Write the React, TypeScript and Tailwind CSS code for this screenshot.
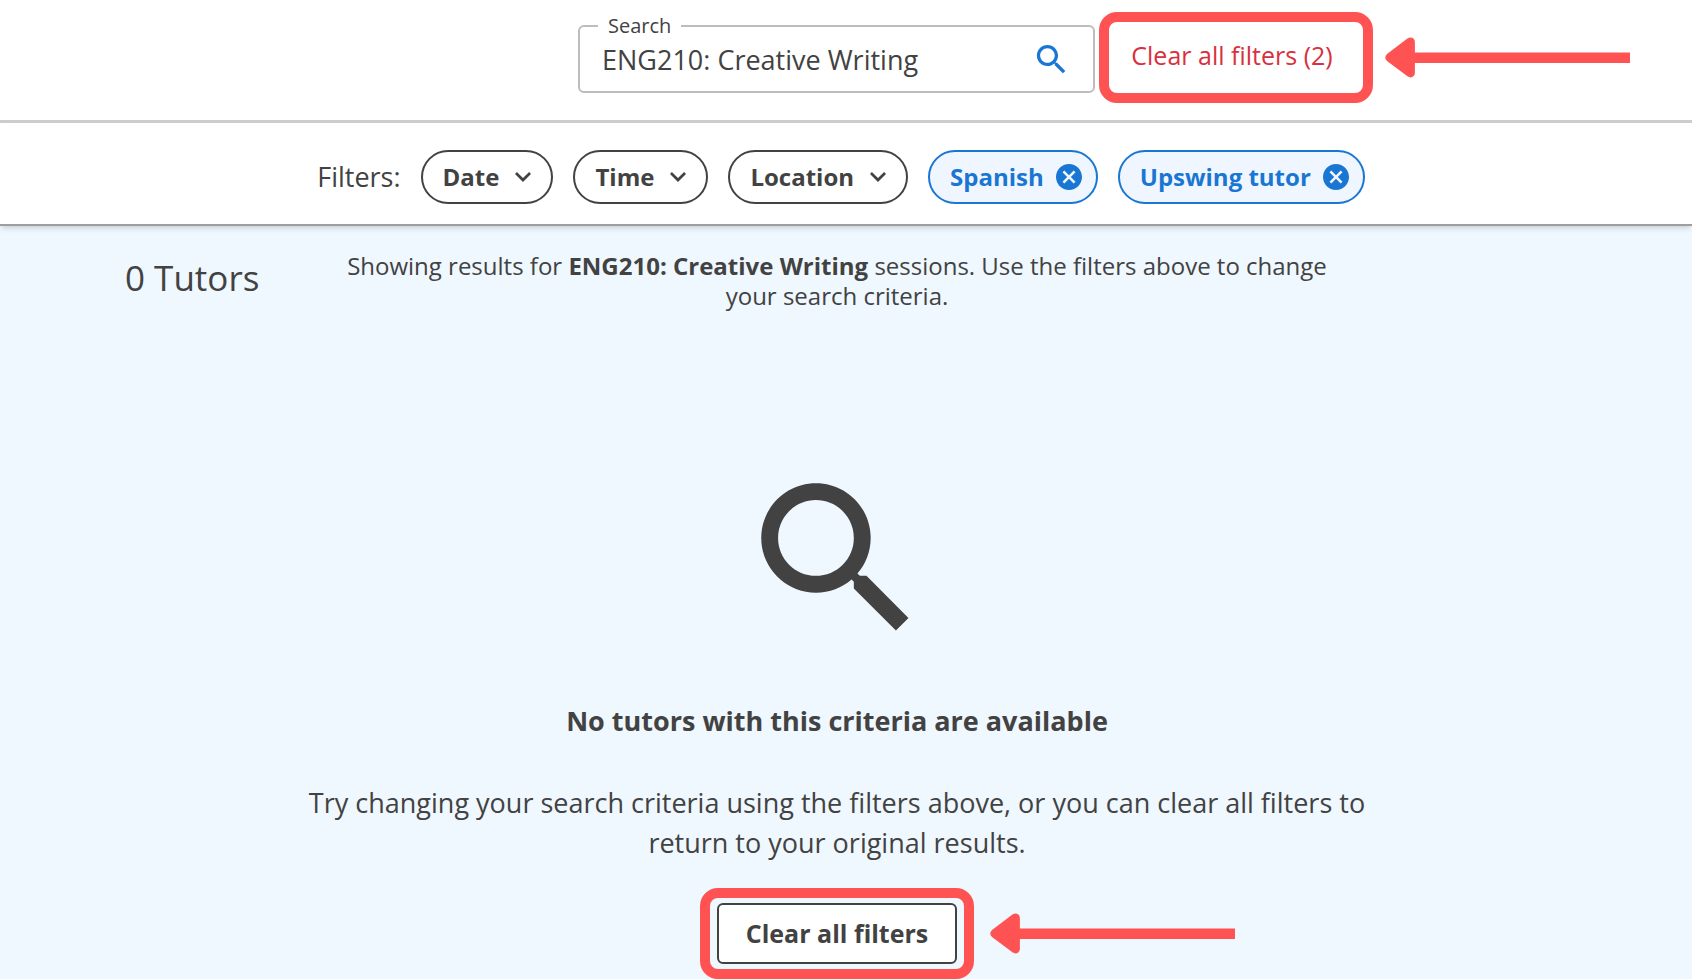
import { useState } from 'react'

const SearchIcon = ({ className }: { className: string }) => (
    <svg viewBox="0 0 24 24" fill="currentColor" className={className} aria-hidden="true">
        <path d="M15.5 14h-.79l-.28-.27C15.41 12.59 16 11.11 16 9.5 16 5.91 13.09 3 9.5 3S3 5.91 3 9.5 5.91 16 9.5 16c1.61 0 3.09-.59 4.23-1.57l.27.28v.79l5 4.99L20.49 19l-4.99-5zm-6 0C7.01 14 5 11.99 5 9.5S7.01 5 9.5 5 14 7.01 14 9.5 11.99 14 9.5 14z" />
    </svg>
)

const ChevronIcon = () => (
    <svg viewBox="6 8.59 12 7.41" fill="currentColor" className="w-4" aria-hidden="true">
        <path d="M16.59 8.59 12 13.17 7.41 8.59 6 10l6 6 6-6z" />
    </svg>
)

const RemoveIcon = () => (
    <svg viewBox="2 2 20 20" fill="currentColor" className="w-[26px]" aria-hidden="true">
        <path d="M12 2C6.47 2 2 6.47 2 12s4.47 10 10 10 10-4.47 10-10S17.53 2 12 2zm5 13.59L15.59 17 12 13.41 8.41 17 7 15.59 10.59 12 7 8.41 8.41 7 12 10.59 15.59 7 17 8.41 13.41 12 17 15.59z" />
    </svg>
)

const Arrow = ({ className }: { className: string }) => (
    <svg viewBox="0 0 246 41" fill="#ff5353" className={className} aria-hidden="true">
        <path d="M30 15.500H246V26H30V36C30 40 26 42 22.500 39.500L2 24Q-1.500 20.500 2 17L22.500 1.500C26 -1 30 1 30 5Z" />
    </svg>
)

const menus = ['Date', 'Time', 'Location']

const App = () => {
    const [course, setCourse] = useState('ENG210: Creative Writing')
    const [active, setActive] = useState(['Spanish', 'Upswing tutor'])

    const clearAll = () => setActive([])

    return <div className="min-h-screen bg-[#eff7ff] font-['Open_Sans',sans-serif] text-[#424242]">
        <header className="flex items-start justify-end border-b-3 border-[#cccccc] bg-white pt-3 pr-[62px] pb-[17px]">
            <fieldset className="mr-1 w-[517px] rounded-md border-2 border-[#bdbdbd] pl-[6px]">
                <legend className="ml-3 px-[10px] text-xl leading-7">
                    <label htmlFor="search">Search</label>
                </legend>
                <div className="flex h-[51px] items-start pr-[22px] pl-4">
                    <input id="search" type="text" value={course} onChange={e => setCourse(e.target.value)} className="h-10 min-w-0 flex-1 text-[27px] outline-none" />
                    <button type="button" aria-label="Search" className="text-[#1976d2]"><SearchIcon className="size-[39px]" /></button>
                </div>
            </fieldset>
            <div className="flex h-[91px] w-[274px] rounded-[18px] border-10 border-[#ff5353]">
                <button type="button" onClick={clearAll} className="flex-1 pr-2 pb-[3px] text-[25px] text-[#d9303e]">Clear all filters ({active.length})</button>
            </div>
            <Arrow className="mt-[25px] ml-3 w-[245px]" />
        </header>

        <div className="relative flex items-center justify-center gap-5 border-b-2 border-[#9e9e9e] bg-white pt-[27px] pr-[10px] pb-5 shadow-md">
            <span className="text-[27px] leading-[54px]">Filters:</span>
            {menus.map(menu =>
                <button key={menu} type="button" className="flex h-[54px] items-center gap-4 rounded-full border-2 border-[#424242] px-5 text-2xl font-bold">
                    {menu}
                    <ChevronIcon />
                </button>
            )}
            {active.map(filter =>
                <button key={filter} type="button" onClick={() => setActive(active.filter(f => f !== filter))} className="flex h-[54px] items-center gap-3 rounded-full border-2 border-[#1976d2] bg-[#f0f6ff] pr-[14px] pl-5 text-2xl font-bold text-[#1976d2]">
                    {filter}
                    <RemoveIcon />
                </button>
            )}
        </div>

        <main className="pr-[18px]">
            <div className="grid grid-cols-[200px_1fr_200px] px-[125px] pt-[25px]">
                <h1 className="pt-[3px] text-[35px] leading-12">0 Tutors</h1>
                <p className="text-center text-2xl leading-[30px]">Showing results for <b>{course}</b> sessions. Use the filters above to change your search criteria.</p>
            </div>

            <section className="flex flex-col items-center pt-[147px] text-center">
                <SearchIcon className="size-[202px]" />
                <h2 className="mt-[41px] text-[27px] leading-10 font-bold">No tutors with this criteria are available</h2>
                <p className="mt-[42px] max-w-[1100px] text-[27px] leading-10">Try changing your search criteria using the filters above, or you can clear all filters to return to your original results.</p>
                <div className="relative mt-[25px] flex h-[91px] w-[274px] rounded-[18px] border-10 border-[#ff5353] px-[7px] py-[5px]">
                    <button type="button" onClick={clearAll} className="flex-1 rounded-md border-2 border-[#424242] bg-white text-[25px] font-bold">Clear all filters</button>
                    <Arrow className="absolute top-[15px] left-full ml-[26px] w-[245px]" />
                </div>
            </section>
        </main>
    </div>
}

export default App
